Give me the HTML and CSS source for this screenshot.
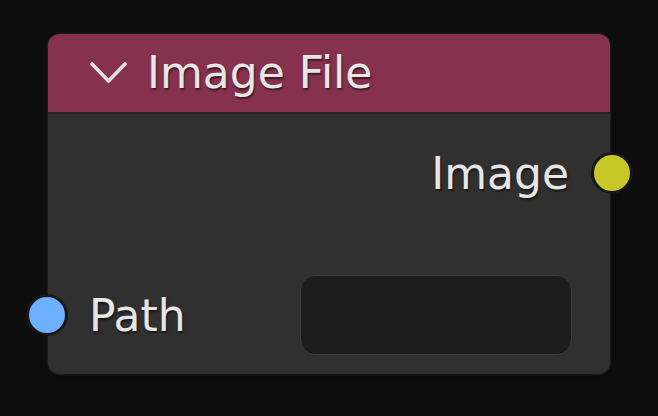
FILE: index.html
```html
<!DOCTYPE html>
<html lang="en">

<head>
    <meta charset="UTF-8">
    <title>Image File</title>
    <link rel="stylesheet" href="styles.css">
</head>

<body>
    <div class="node">
        <!-- node header -->
        <div class="node-header">
            <svg class="chevron" width="37" height="23" viewBox="0 0 37 23">
                <polyline points="2,2 18.5,19 35,2" />
            </svg>
            <span class="node-title">Image File</span>
        </div>

        <!-- node body -->
        <div class="node-body">
            <div class="socket-row output">
                <span class="socket-label">Image</span>
                <span class="socket socket-image"></span>
            </div>
            <div class="socket-row input">
                <span class="socket socket-path"></span>
                <span class="socket-label">Path</span>
                <div class="path-field"></div>
            </div>
        </div>
    </div>
</body>

</html>
```

FILE: styles.css
```css
:root {
    --bg: #0e0e0e;
    --node-body: #303030;
    --node-header: #86324e;
    --outline: #1a1a1a;
    --text: #e6e6e6;
    --field: #1d1d1d;
    --field-border: #3b3b3b;
}

* {
    margin: 0;
    padding: 0;
    box-sizing: border-box;
    font-family: 'DejaVu Sans', 'Noto Sans', sans-serif;
}

body {
    background: var(--bg);
    width: 658px;
    height: 416px;
    overflow: hidden;
    padding: 34px 0 0 48px;
}

.node {
    width: 562px;
    height: 340px;
    border-radius: 12px;
    background: var(--node-body);
    box-shadow: 0 0 0 1.5px var(--outline), 2px 3px 8px rgba(0, 0, 0, 0.5);
    display: flex;
    flex-direction: column;
}

/* header */
.node-header {
    height: 80px;
    flex-shrink: 0;
    background: var(--node-header);
    border-radius: 12px 12px 0 0;
    border-bottom: 2px solid #242424;
    display: flex;
    align-items: center;
    padding-left: 42px;
    gap: 20px;
}

.chevron {
    margin-top: 1px;
}

.chevron polyline {
    fill: none;
    stroke: #e0e0e0;
    stroke-width: 3.6;
    stroke-linecap: round;
    stroke-linejoin: round;
}

.node-title {
    font-size: 44px;
    color: var(--text);
    text-shadow: 1px 2px 2px rgba(0, 0, 0, 0.55);
    line-height: 1;
    margin-top: -1px;
}

/* body */
.node-body {
    flex: 1;
    display: flex;
    flex-direction: column;
}

.socket-row {
    position: relative;
    display: flex;
    align-items: center;
}

.socket-row.output {
    height: 60px;
    margin-top: 29px;
    justify-content: flex-end;
    padding-right: 41px;
}

.socket-row.input {
    height: 80px;
    margin-top: 72px;
    padding-left: 41px;
}

.socket-label {
    font-size: 44px;
    color: var(--text);
    text-shadow: 1px 2px 2px rgba(0, 0, 0, 0.55);
}

.socket {
    position: absolute;
    top: 50%;
    width: 42px;
    height: 42px;
    margin-top: -21px;
    border-radius: 50%;
    border: 3px solid #171717;
}

.socket-image {
    right: -23px;
    background: #c7c72a;
}

.socket-path {
    left: -22px;
    background: #6cb0ff;
}

.path-field {
    margin-left: auto;
    margin-right: 38px;
    width: 272px;
    height: 80px;
    background: var(--field);
    border: 1.5px solid var(--field-border);
    border-radius: 15px;
}
```
